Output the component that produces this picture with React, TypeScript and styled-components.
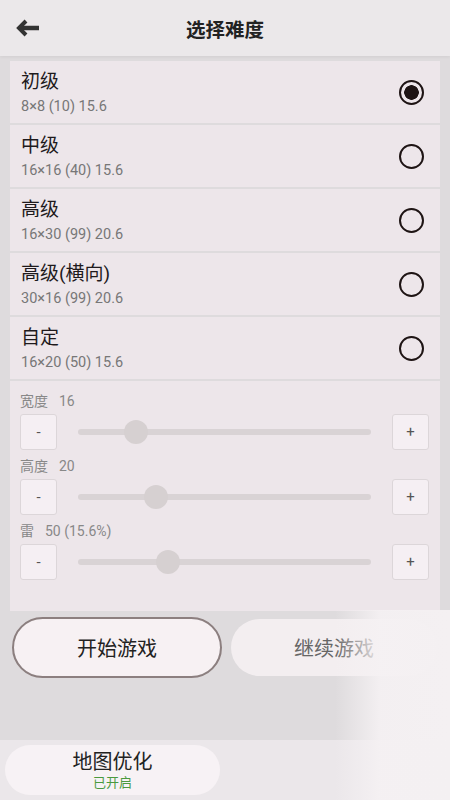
import React from "react";
import styled, { createGlobalStyle } from "styled-components";

const GlobalStyle = createGlobalStyle`
    html, body {
        margin: 0;
        padding: 0;
        background: #dedbdd;
        font-family: Roboto, "Noto Sans CJK SC", sans-serif;
    }
`;

interface Level {
    name: string;
    info: string;
}

const levels: Level[] = [
    { name: "初级", info: "8×8 (10) 15.6" },
    { name: "中级", info: "16×16 (40) 15.6" },
    { name: "高级", info: "16×30 (99) 20.6" },
    { name: "高级(横向)", info: "30×16 (99) 20.6" },
    { name: "自定", info: "16×20 (50) 15.6" },
];

const sliders = [
    { label: "宽度", value: "16", pos: 58 },
    { label: "高度", value: "20", pos: 78 },
    { label: "雷", value: "50 (15.6%)", pos: 90 },
];

const BackArrow = () => (
    <svg width="24" height="18" viewBox="0 0 24 18">
        <path d="M10 2 L3 9 L10 16" fill="none" stroke="#333" strokeWidth="4" strokeLinejoin="miter" />
        <path d="M4 9 H23" stroke="#333" strokeWidth="4.5" />
    </svg>
);

export default function App() {
    const [selected, setSelected] = React.useState(0);

    return <Page>
        <GlobalStyle />
        <Header>
            <BackBtn><BackArrow /></BackBtn>
            <Title>选择难度</Title>
        </Header>

        <Content>
            {levels.map((level, i) =>
                <LevelCard key={level.name} onClick={() => setSelected(i)}>
                    <LevelText>
                        <LevelName>{level.name}</LevelName>
                        <LevelInfo>{level.info}</LevelInfo>
                    </LevelText>
                    <Radio $checked={selected === i} />
                </LevelCard>
            )}

            <SliderPanel>
                {sliders.map(s =>
                    <SliderGroup key={s.label}>
                        <SliderLabel>{s.label}<Value>{s.value}</Value></SliderLabel>
                        <SliderRow>
                            <StepBtn>-</StepBtn>
                            <Track>
                                <Thumb style={{ left: s.pos }} />
                            </Track>
                            <StepBtn>+</StepBtn>
                        </SliderRow>
                    </SliderGroup>
                )}
            </SliderPanel>

            <ActionRow>
                <ActionBtn $primary>开始游戏</ActionBtn>
                <ActionBtn>继续游戏</ActionBtn>
            </ActionRow>
        </Content>

        <BottomBar>
            <OptionBtn>
                <OptionName>地图优化</OptionName>
                <OptionState>已开启</OptionState>
            </OptionBtn>
        </BottomBar>

        <Watermark />
    </Page>;
}

const Page = styled.div`
    position: relative;
    display: flex;
    flex-direction: column;
    height: 800px;
    overflow: hidden;
`;

const Header = styled.div`
    position: relative;
    display: flex;
    align-items: center;
    justify-content: center;
    height: 56px;
    background: #ebe8ea;
    box-shadow: 0 1px 3px rgba(0, 0, 0, 0.06);
`;

const BackBtn = styled.div`
    position: absolute;
    left: 16px;
    top: 19px;
    display: flex;
`;

const Title = styled.div`
    font-size: 19.5px;
    font-weight: bold;
    color: #222;
`;

const Content = styled.div`
    display: flex;
    flex-direction: column;
    gap: 2px;
    padding: 5px 10px 0;
`;

const LevelCard = styled.div`
    display: flex;
    align-items: center;
    height: 62px;
    padding: 0 16px 0 11px;
    background: #ede6ea;
    cursor: pointer;
`;

const LevelText = styled.div`
    flex: 1;
    display: flex;
    flex-direction: column;
    align-self: flex-start;
    padding-top: 8px;
`;

const LevelName = styled.div`
    font-size: 19px;
    line-height: 26px;
    color: #1e1a1c;
`;

const LevelInfo = styled.div`
    margin-top: 3px;
    font-size: 14.5px;
    line-height: 18px;
    color: #777;
`;

const Radio = styled.div<{ $checked?: boolean }>`
    box-sizing: border-box;
    width: 25px;
    height: 25px;
    border: 2px solid #1e1414;
    border-radius: 50%;
    background: ${p => p.$checked ? "radial-gradient(circle, #1e1414 0 7px, transparent 7.5px)" : "transparent"};
`;

const SliderPanel = styled.div`
    display: flex;
    flex-direction: column;
    gap: 7px;
    height: 230px;
    box-sizing: border-box;
    padding: 11px 11px 0 10px;
    background: #ede6ea;
`;

const SliderGroup = styled.div`
    display: flex;
    flex-direction: column;
    gap: 4px;
`;

const SliderLabel = styled.div`
    font-size: 14px;
    line-height: 18px;
    color: #888;
`;

const Value = styled.span`
    margin-left: 11px;
`;

const SliderRow = styled.div`
    display: flex;
    align-items: center;
    gap: 21px;
`;

const StepBtn = styled.div`
    box-sizing: border-box;
    width: 37px;
    height: 36px;
    display: flex;
    align-items: center;
    justify-content: center;
    background: #f5eff3;
    border: 1px solid #dcd6d9;
    border-radius: 3px;
    font-size: 15px;
    color: #555;
`;

const Track = styled.div`
    position: relative;
    flex: 1;
    height: 6px;
    border-radius: 3px;
    background: #d9d3d5;
`;

const Thumb = styled.div`
    position: absolute;
    top: 50%;
    width: 24px;
    height: 24px;
    margin: -12px 0 0 -12px;
    border-radius: 50%;
    background: #d6d0d1;
`;

const ActionRow = styled.div`
    display: flex;
    gap: 7px;
    margin-top: 4px;
    padding-left: 2px;
`;

const ActionBtn = styled.div<{ $primary?: boolean }>`
    box-sizing: border-box;
    flex: 0 0 210px;
    height: 61px;
    display: flex;
    align-items: center;
    justify-content: center;
    border-radius: 31px;
    border: 2px solid ${p => p.$primary ? "#8c7f7f" : "transparent"};
    background: ${p => p.$primary ? "#f7f1f3" : "#f3eef0"};
    background-clip: padding-box;
    font-size: 20px;
    color: ${p => p.$primary ? "#222" : "#666"};
`;

const BottomBar = styled.div`
    margin-top: auto;
    height: 60px;
    box-sizing: border-box;
    padding: 5px;
    background: #ebe7ea;
`;

const OptionBtn = styled.div`
    width: 215px;
    height: 50px;
    display: flex;
    flex-direction: column;
    align-items: center;
    justify-content: center;
    border-radius: 25px;
    background: #f7f2f5;
`;

const OptionName = styled.div`
    font-size: 20px;
    line-height: 24px;
    color: #222;
`;

const OptionState = styled.div`
    font-size: 13px;
    line-height: 17px;
    color: #4a9a3f;
`;

const Watermark = styled.div`
    position: absolute;
    right: 0;
    bottom: 0;
    width: 115px;
    height: 190px;
    background: linear-gradient(to right, rgba(245, 241, 243, 0) 0, rgba(245, 241, 243, 0.92) 45px, #f4f0f2 100%);
    pointer-events: none;
`;
